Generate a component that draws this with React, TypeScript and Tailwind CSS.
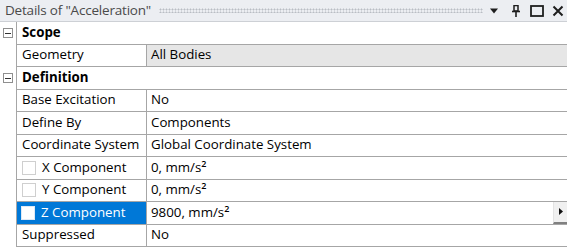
import React from "react";

type Row =
  | { kind: "header"; label: string }
  | {
      kind: "prop";
      name: string;
      value: React.ReactNode;
      readOnly?: boolean;
      check?: boolean;
      selected?: boolean;
      arrow?: boolean;
    };

const mm = (n: string) => (
  <>
    {n}, mm/s<sup className="relative -top-[5px] text-[9px] font-semibold">2</sup>
  </>
);

const rows: Row[] = [
  { kind: "header", label: "Scope" },
  { kind: "prop", name: "Geometry", value: "All Bodies", readOnly: true },
  { kind: "header", label: "Definition" },
  { kind: "prop", name: "Base Excitation", value: "No" },
  { kind: "prop", name: "Define By", value: "Components" },
  { kind: "prop", name: "Coordinate System", value: "Global Coordinate System" },
  { kind: "prop", name: "X Component", value: mm("0"), check: true },
  { kind: "prop", name: "Y Component", value: mm("0"), check: true },
  { kind: "prop", name: "Z Component", value: mm("9800"), check: true, selected: true, arrow: true },
  { kind: "prop", name: "Suppressed", value: "No" },
];

const MinusBox = () => (
  <div className="flex h-[10px] w-[10px] items-center justify-center border border-[#8f8f8f] bg-white">
    <div className="h-[1px] w-[6px] bg-[#333]" />
  </div>
);

const CheckBox = ({ selected }: { selected?: boolean }) => (
  <div
    className={
      selected
        ? "mr-[6px] h-[14px] w-[14px] border border-[#dfe9f5] bg-white"
        : "mr-[6px] h-[14px] w-[14px] border border-[#cfcfcf] bg-white"
    }
  />
);

const TitleBar = () => (
  <div className="flex h-[22px] items-center border-b border-[#cdd0d5] bg-[#eceef2] pl-[5px] pr-[3px]">
    <span className="text-[13.5px] leading-none tracking-[-0.2px] text-[#4a4a4a]">Details of "Acceleration"</span>
    <div className="ml-[8px] mr-[4px] h-[5px] flex-1 bg-[radial-gradient(circle,#b9bdc4_0.9px,transparent_1.1px)] bg-[length:3px_3px]" />
    <div className="flex items-center">
      <svg width="10" height="6" viewBox="0 0 10 6" className="ml-[2px]">
        <path d="M1 0.5 L9 0.5 L5 5.5 Z" fill="#1e1e1e" />
      </svg>
      <svg width="10" height="12" viewBox="0 0 10 12" className="ml-[12px]">
        <path d="M3 0.5 H7 V6 H3 Z" fill="none" stroke="#1e1e1e" strokeWidth="1.5" />
        <path d="M1 6.5 H9" stroke="#1e1e1e" strokeWidth="1.6" />
        <path d="M5 6.5 V12" stroke="#1e1e1e" strokeWidth="1.6" />
      </svg>
      <svg width="14" height="12" viewBox="0 0 14 12" className="ml-[9px]">
        <rect x="1" y="1" width="12" height="10" fill="none" stroke="#1e1e1e" strokeWidth="1.8" />
      </svg>
      <svg width="12" height="12" viewBox="0 0 12 12" className="ml-[8px]">
        <path d="M1.5 1.5 L10.5 10.5 M10.5 1.5 L1.5 10.5" stroke="#1e1e1e" strokeWidth="2" />
      </svg>
    </div>
  </div>
);

export default function App() {
  return (
    <div className="h-[252px] w-[567px] overflow-hidden bg-white font-['Open_Sans',sans-serif] text-black">
      <TitleBar />
      <div className="flex flex-col">
        {rows.map((r, i) =>
          r.kind === "header" ? (
            <div key={i} className="flex h-[22.5px]">
              <div className="flex w-[16px] items-center justify-center">
                <MinusBox />
              </div>
              <div className="flex flex-1 items-center border-b border-l border-[#a6a6a6] pl-[5px] text-[13.3px] font-bold">
                {r.label}
              </div>
            </div>
          ) : (
            <div key={i} className="flex h-[22.5px]">
              <div className="w-[16px]" />
              <div className="flex flex-1 border-b border-l border-[#a6a6a6] text-[13.3px]">
                <div
                  className={
                    r.selected
                      ? "flex w-[130px] items-center border-r border-[#a6a6a6] bg-[#0078d7] pl-[4px] text-white"
                      : "flex w-[130px] items-center border-r border-[#a6a6a6] pl-[5px]"
                  }
                >
                  {r.check && <CheckBox selected={r.selected} />}
                  <span className="whitespace-nowrap">{r.name}</span>
                </div>
                <div
                  className={
                    r.readOnly
                      ? "flex flex-1 items-center bg-[#e6e6e6] pl-[4px]"
                      : "flex flex-1 items-center pl-[4px]"
                  }
                >
                  <span className="flex-1 whitespace-nowrap">{r.value}</span>
                  {r.arrow && (
                    <div className="flex h-full w-[14px] items-center justify-center border-b-2 border-l border-b-[#808080] border-l-[#e3e3e3] bg-[#f0f0f0]">
                      <svg width="4" height="7" viewBox="0 0 4 7">
                        <path d="M0 0 L4 3.5 L0 7 Z" fill="#111" />
                      </svg>
                    </div>
                  )}
                </div>
              </div>
            </div>
          )
        )}
      </div>
    </div>
  );
}
